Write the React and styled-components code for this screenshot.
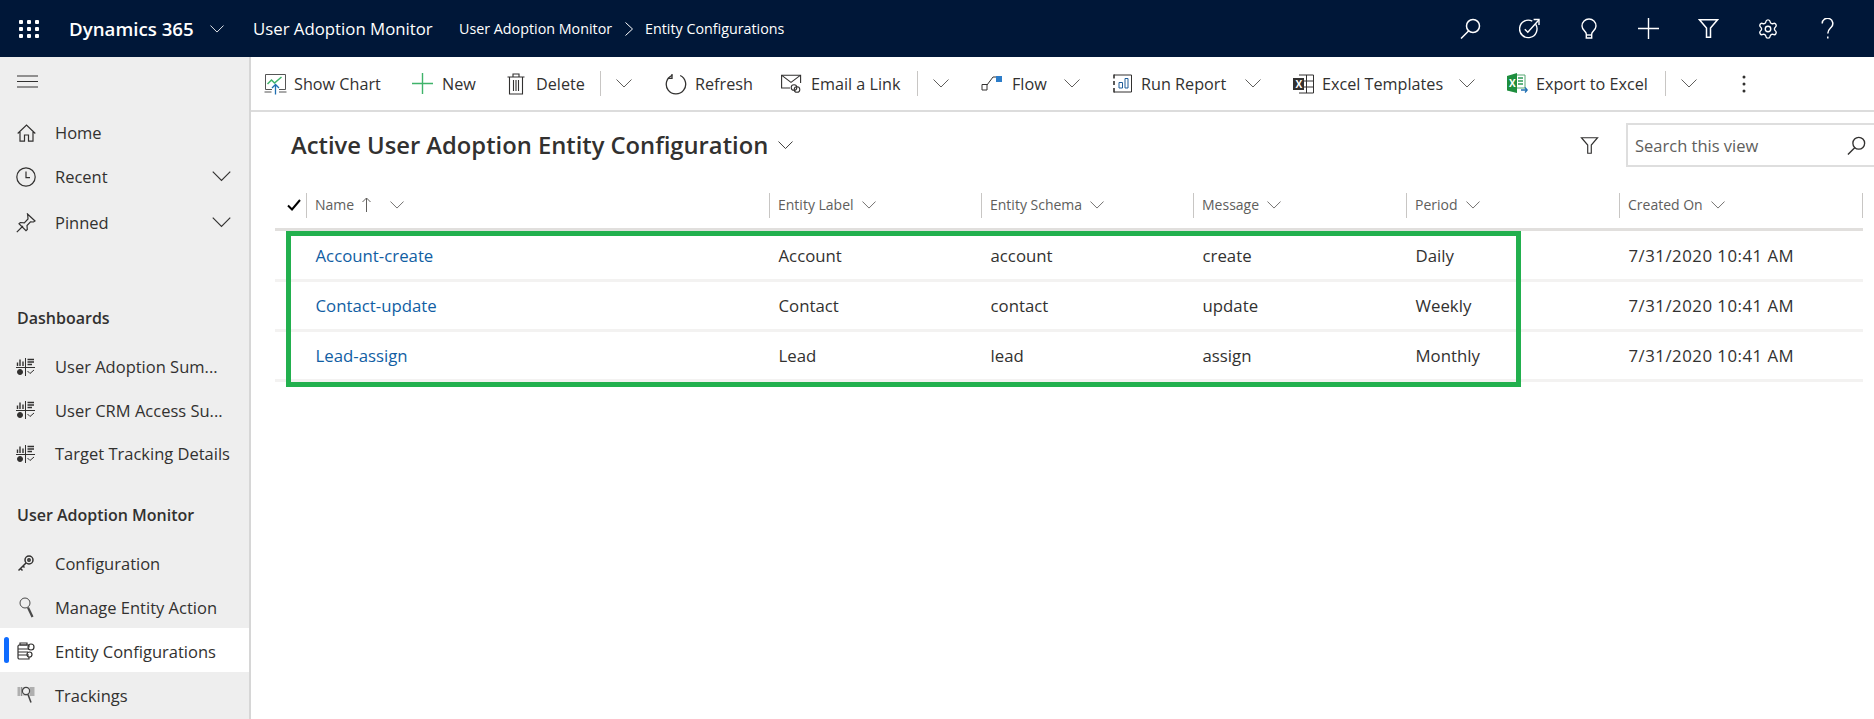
import React from 'react'
import styled, { createGlobalStyle } from 'styled-components'
import { Settings } from 'lucide-react'

const Global = createGlobalStyle`
  html, body { margin: 0; padding: 0; background: #fff; }
  body { font-family: "Open Sans", "Noto Sans", sans-serif; color: #323130; }
`

const Page = styled.div`
  width: 100%;
  height: 100vh;
  display: flex;
  flex-direction: column;
  overflow: hidden;
`

const TopBar = styled.header`
  height: 57px;
  flex: none;
  background: #001738;
  color: #fff;
  display: flex;
  align-items: center;
`

const Waffle = styled.div`
  width: 20px;
  height: 18px;
  margin-left: 19px;
  display: grid;
  grid-template-columns: repeat(3, 4px);
  grid-template-rows: repeat(3, 4px);
  justify-content: space-between;
  align-content: space-between;
  span { background: #fff; border-radius: 1px; }
`

const Brand = styled.div`
  margin-left: 30px;
  width: 141px;
  font-size: 18.7px;
  font-weight: 600;
  white-space: nowrap;
`

const AppName = styled.div`
  margin-left: 29px;
  width: 206px;
  font-size: 16.8px;
  white-space: nowrap;
`

const Crumbs = styled.div`
  display: flex;
  align-items: center;
  font-size: 14.3px;
  white-space: nowrap;
`

const CrumbText = styled.span`
  width: ${p => p.$w}px;
`

const TopIcons = styled.div`
  margin-left: auto;
  margin-right: 17px;
  display: flex;
`

const TopIcon = styled.div`
  width: 59.5px;
  height: 57px;
  display: flex;
  align-items: center;
  justify-content: center;
`

const Body = styled.div`
  flex: 1;
  display: flex;
  min-height: 0;
`

const Sidebar = styled.nav`
  width: 249px;
  flex: none;
  background: #eeeeee;
  border-right: 2px solid #d6d6d6;
`

const MenuRow = styled.div`
  height: 52.5px;
  display: flex;
  align-items: center;
  padding-left: 17px;
  padding-bottom: 3px;
  box-sizing: border-box;
`

const NavItem = styled.div`
  position: relative;
  height: ${p => p.$h || 44}px;
  margin-top: ${p => p.$mt || 0}px;
  padding-top: 2px;
  box-sizing: border-box;
  display: flex;
  align-items: center;
  font-size: 16.5px;
  white-space: nowrap;
  background: ${p => (p.$active ? '#fff' : 'transparent')};
`

const NavIcon = styled.span`
  width: 55px;
  flex: none;
  display: flex;
  justify-content: center;
  padding-right: 3px;
  box-sizing: border-box;
`

const NavChevron = styled.span`
  margin-left: auto;
  margin-right: 18px;
  display: flex;
`

const Marker = styled.span`
  position: absolute;
  left: 4px;
  top: 9px;
  width: 5px;
  height: 26px;
  border-radius: 3px;
  background: #0f6cff;
`

const SectionTitle = styled.div`
  height: 40px;
  margin-top: ${p => p.$mt}px;
  padding-left: 17px;
  display: flex;
  align-items: center;
  font-size: 16px;
  font-weight: 600;
`

const Main = styled.main`
  flex: 1;
  min-width: 0;
  display: flex;
  flex-direction: column;
  overflow: hidden;
`

const CommandBar = styled.div`
  height: 55px;
  flex: none;
  box-sizing: border-box;
  border-bottom: 2px solid #dcdcdc;
  padding-left: 13px;
  display: flex;
  align-items: center;
  font-size: 16.2px;
`

const Cmd = styled.div`
  width: ${p => p.$w}px;
  flex: none;
  display: flex;
  align-items: center;
  white-space: nowrap;
`

const CmdIcon = styled.span`
  width: ${p => p.$w || 30}px;
  flex: none;
  display: flex;
  align-items: center;
`

const CmdLabel = styled.span`
  width: ${p => p.$w}px;
  flex: none;
`

const CmdSep = styled.span`
  width: 1px;
  height: 25px;
  background: #c8c6c4;
  margin-right: 15px;
  flex: none;
`

const TitleRow = styled.div`
  margin: 11px -12px 0 40px;
  height: 44px;
  flex: none;
  display: flex;
  align-items: center;
`

const Title = styled.h1`
  margin: 0;
  font-size: 23.75px;
  font-weight: 600;
  white-space: nowrap;
`

const TitleChevron = styled.span`
  margin-left: 10px;
  display: flex;
`

const FilterBtn = styled.span`
  margin-left: auto;
  margin-right: 27px;
  display: flex;
`

const SearchBox = styled.div`
  width: 260px;
  height: 44px;
  flex: none;
  box-sizing: border-box;
  border: 2px solid #dedede;
  padding: 0 18px 0 7px;
  display: flex;
  align-items: center;
  justify-content: space-between;
  font-size: 16.5px;
  color: #605e5c;
`

const TableWrap = styled.div`
  position: relative;
  margin-left: 24px;
  width: 1588px;
`

const columns = '31px 463px 212px 212px 213px 213px 244px'

const HeadRow = styled.div`
  display: grid;
  grid-template-columns: ${columns};
  height: 64px;
  box-sizing: border-box;
  padding-top: 26px;
  border-bottom: 3px solid #e1dfdd;
  margin-bottom: 1px;
  align-items: start;
`

const CheckCell = styled.div`
  height: 25px;
  display: flex;
  align-items: center;
  padding-left: 12px;
  padding-bottom: 1px;
  box-sizing: border-box;
`

const HeadCell = styled.div`
  height: 25px;
  box-sizing: border-box;
  border-left: 1px solid #c8c6c4;
  border-right: ${p => (p.$last ? '1px solid #c8c6c4' : 'none')};
  padding: 0 0 2px 8px;
  display: flex;
  align-items: center;
  gap: 8px;
  font-size: 14px;
  color: #605e5c;
  white-space: nowrap;
`

const Row = styled.div`
  display: grid;
  grid-template-columns: ${columns};
  height: 50px;
  box-sizing: border-box;
  border-bottom: 3px solid #f3f2f1;
  align-items: center;
  font-size: 16.8px;
`

const Cell = styled.div`
  padding-left: 9.5px;
  white-space: nowrap;
`

const LinkCell = styled(Cell)`
  color: #115ea3;
`

const DateCell = styled(Cell)`
  letter-spacing: 0.5px;
`

const Highlight = styled.div`
  position: absolute;
  left: 11px;
  top: 64px;
  width: 1235px;
  height: 156px;
  box-sizing: border-box;
  border: 5px solid #22b04e;
  pointer-events: none;
`

const Svg = ({ w = 20, h = 20, c = 'currentColor', sw = 1.2, children }) => (
  <svg width={w} height={h} viewBox={`0 0 ${w} ${h}`} fill="none" stroke={c} strokeWidth={sw} style={{ display: 'block' }}>
    {children}
  </svg>
)

const Chevron = ({ w = 16, c = '#605e5c' }) => (
  <svg width={w} height={w / 2 + 1} viewBox="0 0 16 9" fill="none" stroke={c} strokeWidth="1" style={{ display: 'block' }}>
    <path d="M.5.5 8 8l7.5-7.5" />
  </svg>
)

const IconSearch = ({ c = '#fff', size = 21 }) => (
  <svg width={size} height={size} viewBox="0 0 21 21" fill="none" stroke={c} strokeWidth="1.5" style={{ display: 'block' }}>
    <circle cx="13" cy="8" r="6.5" />
    <path d="M8.8 12.8 1 20.5" />
  </svg>
)

const IconTask = () => (
  <Svg w={21} h={21} c="#fff" sw={1.4}>
    <path d="M16.6 6.2a8.7 8.7 0 1 1-3.3-3" />
    <path d="m5.8 11.2 3 3L19.8 2" />
    <path d="M14.6 1.5h5.4v5.4" />
  </Svg>
)

const IconBulb = () => (
  <Svg w={16} h={21} c="#fff" sw={1.4}>
    <path d="M5.3 20h5.4v-4c0-2.5 4.3-3.8 4.3-8a7 7 0 0 0-14 0c0 4.2 4.3 5.5 4.3 8z" />
    <path d="M5.3 17h5.4" />
  </Svg>
)

const IconPlus = ({ c = '#fff', size = 21, sw = 1.4 }) => (
  <Svg w={size} h={size} c={c} sw={sw}>
    <path d={`M${size / 2} 0v${size}M0 ${size / 2}h${size}`} />
  </Svg>
)

const IconFunnel = ({ c = '#fff', w = 21, h = 19, sw = 1.5 }) => (
  <svg width={w} height={h} viewBox="0 0 21 19" fill="none" stroke={c} strokeWidth={sw} style={{ display: 'block' }}>
    <path d="M1.5.8h18l-7 8.2v9.2h-4V9z" />
  </svg>
)

const IconHelp = () => (
  <Svg w={13} h={21} c="#fff" sw={1.5}>
    <path d="M1.2 5.6a5.3 5.3 0 1 1 9 3.7c-1.8 1.8-3.4 2.8-3.4 6.2" />
    <path d="M6.8 18.4v2" />
  </Svg>
)

const IconHamburger = () => (
  <Svg w={21} h={13} c="#323130" sw={1.2}>
    <path d="M0 1h21M0 6.5h21M0 12h21" />
  </Svg>
)

const IconHome = () => (
  <Svg w={19} h={18} c="#323130" sw={1.2}>
    <path d="M.7 9.5 9.5 1l8.8 8.5M3 8v9.2h4.5V11h4v6.2H16V8" />
  </Svg>
)

const IconClock = () => (
  <Svg w={20} h={20} c="#323130" sw={1.2}>
    <circle cx="10" cy="10" r="9.2" />
    <path d="M10 4.5v6.2h4" />
  </Svg>
)

const IconPin = () => (
  <Svg w={20} h={20} c="#323130" sw={1.2}>
    <path d="M.8 19.2 7 13M11.5 1l7.5 7-1.5 1-3-.2-3.5 3.7.3 4-1.3 1.2L3 10.8l1.3-1.3 4 .3L12 6l-.2-3z" />
  </Svg>
)

const IconDash = () => (
  <svg width="20" height="18" viewBox="0 0 20 18" style={{ display: 'block' }} stroke="#323130" strokeWidth="1" fill="none">
    <path d="M0 9.5h19M9.5 0v18" />
    <path d="M1.5 8V4.5M4 8V1.5M7 8V3.5M11.5 1.5H18M11.5 4H18M11.5 6.5H16" strokeWidth="1.4" />
    <circle cx="4" cy="14" r="2.5" fill="#323130" />
    <path d="m11.5 13 2.5 2.5 4-3.5" />
  </svg>
)

const IconKey = () => (
  <Svg w={18} h={18} c="#323130" sw={1.5}>
    <circle cx="12" cy="6" r="4" />
    <circle cx="12" cy="6" r="1.2" />
    <path d="M9 9 1.5 16.5M3.5 14.5l2 2M6 12l1.5 1.5" />
  </Svg>
)

const IconManage = () => (
  <svg width="15" height="21" viewBox="0 0 15 21" fill="none" stroke="#4a4a4a" style={{ display: 'block' }}>
    <circle cx="6" cy="6" r="5" strokeWidth="1" />
    <path d="m9 10.5 4.5 9.5" strokeWidth="2.2" />
  </svg>
)

const IconEntity = () => (
  <svg width="18" height="18" viewBox="0 0 18 18" fill="none" stroke="#323130" strokeWidth="1.2" style={{ display: 'block' }}>
    <path d="M12 5.5V3H2a1.5 1.5 0 0 0-1 1.2v11.6A1.5 1.5 0 0 0 2 17h10v-2" />
    <path d="M3 1h7v2H3zM1 7h11M1 10h10M1 13h11" />
    <circle cx="14" cy="5" r="3" />
    <circle cx="12.5" cy="12.5" r="2.5" />
  </svg>
)

const IconTrack = () => (
  <svg width="18" height="18" viewBox="0 0 18 18" fill="none" style={{ display: 'block' }}>
    <path d="M0 1h18v9H0z" fill="#cfcfcf" />
    <path d="M2 1v9M4.5 1v9M14 1v9M16 1v9" stroke="#8f8f8f" />
    <circle cx="9" cy="5" r="3.6" fill="#eee" stroke="#444" strokeWidth="1.2" />
    <path d="m11 8.5 3 8" stroke="#444" strokeWidth="1.6" />
  </svg>
)

const IconChart = () => (
  <svg width="23" height="22" viewBox="0 0 23 22" fill="none" style={{ display: 'block' }}>
    <path d="M1.5 16.5V1.5h20v15H15M8 16.5H1.5M.5 19h7M15 19h7.5" stroke="#555" />
    <path d="m3.5 11 4-4 3 3 7-6" stroke="#3fb36a" strokeWidth="1.5" />
    <path d="M11.5 21.5V11.5M8 15l3.5-3.5L15 15" stroke="#1f6fb2" strokeWidth="1.3" />
  </svg>
)

const IconTrash = () => (
  <Svg w={18} h={22} c="#323130" sw={1.1}>
    <path d="M.5 4h17M6 4V1h6v3M2.5 4v17h13V4M6.5 7v11M9 7v11M11.5 7v11" />
  </Svg>
)

const IconRefresh = () => (
  <Svg w={22} h={22} c="#323130" sw={1.3}>
    <path d="M7.2 2.3a9.7 9.7 0 1 0 8 .2" />
    <path d="M7 1v4.4H2.8" />
  </Svg>
)

const IconMail = () => (
  <Svg w={21} h={19} c="#323130" sw={1.1}>
    <path d="M9 14H.6V1.2h19V9" />
    <path d="m.8 1.4 9.2 7 9.3-7" />
    <circle cx="13" cy="13.5" r="2.8" />
    <circle cx="16" cy="15.5" r="2.8" />
  </Svg>
)

const IconFlow = () => (
  <svg width="21" height="15" viewBox="0 0 21 15" fill="none" style={{ display: 'block' }}>
    <path d="M1 8.5h5v5.5H1z" stroke="#323130" />
    <path d="m6 9 6-8h3" stroke="#323130" />
    <path d="M15 0h6v6h-6z" fill="#2d7dc9" />
  </svg>
)

const IconReport = () => (
  <svg width="20" height="19" viewBox="0 0 20 19" fill="none" stroke="#323130" style={{ display: 'block' }}>
    <path d="M2 1h17.5v17H2" />
    <path d="M2 .5v4M2 7v4M2 14v4.5" strokeWidth="1.6" />
    <path d="M7 8.5h3.5V14H7zM13 4.5h3V14h-3z" stroke="#1f5c99" />
  </svg>
)

const IconExcelT = () => (
  <svg width="21" height="20" viewBox="0 0 21 20" fill="none" style={{ display: 'block' }}>
    <path d="M6 1h14.5v18H6M6 7h14.5M6 13h14.5M13.5 1v18" stroke="#323130" />
    <path d="M0 4h11v12H0z" fill="#323130" />
    <text x="2.6" y="13.5" fontSize="10" fontWeight="700" fill="#fff" fontFamily="Open Sans">X</text>
  </svg>
)

const IconExcel = () => (
  <svg width="21" height="21" viewBox="0 0 21 21" fill="none" style={{ display: 'block' }}>
    <path d="M8 2h10v13H8z" fill="#fff" stroke="#57a773" />
    <path d="M11 5h5M11 8h5M11 11h5" stroke="#2e9b57" strokeWidth="1.6" />
    <path d="M0 3 10 0v20L0 17.5z" fill="#1e8e3e" />
    <text x="2" y="13.5" fontSize="10" fontWeight="700" fill="#fff" fontFamily="Open Sans">X</text>
    <path d="M14 17h6m-2-2.5 2.2 2.5-2.2 2.5" stroke="#1f6fb2" strokeWidth="1.3" />
  </svg>
)

const IconMore = () => (
  <svg width="4" height="18" viewBox="0 0 4 18" fill="#323130" style={{ display: 'block' }}>
    <circle cx="2" cy="2" r="1.5" />
    <circle cx="2" cy="9" r="1.5" />
    <circle cx="2" cy="16" r="1.5" />
  </svg>
)

const IconCheck = () => (
  <Svg w={14} h={12} c="#000" sw={2}>
    <path d="m1 6.5 4 4L13 1" />
  </Svg>
)

const IconSortUp = () => (
  <Svg w={9} h={15} c="#605e5c" sw={1}>
    <path d="M4.5 15V1M.5 5l4-4 4 4" />
  </Svg>
)

const rows = [
  ['Account-create', 'Account', 'account', 'create', 'Daily'],
  ['Contact-update', 'Contact', 'contact', 'update', 'Weekly'],
  ['Lead-assign', 'Lead', 'lead', 'assign', 'Monthly']
]

const headers = ['Entity Label', 'Entity Schema', 'Message', 'Period']

const App = () => {
  return (
    <Page>
      <Global />
      <TopBar>
        <Waffle>
          {Array.from({ length: 9 }).map((_, i) => <span key={i} />)}
        </Waffle>
        <Brand>Dynamics 365</Brand>
        <Chevron w={14} c="#fff" />
        <AppName>User Adoption Monitor</AppName>
        <Crumbs>
          <CrumbText $w={166}>User Adoption Monitor</CrumbText>
          <svg width="8" height="14" viewBox="0 0 8 14" fill="none" stroke="#fff" style={{ marginRight: 12 }}>
            <path d="m.5.5 7 6.5-7 6.5" />
          </svg>
          <span>Entity Configurations</span>
        </Crumbs>
        <TopIcons>
          <TopIcon><IconSearch /></TopIcon>
          <TopIcon><IconTask /></TopIcon>
          <TopIcon><IconBulb /></TopIcon>
          <TopIcon><IconPlus /></TopIcon>
          <TopIcon><IconFunnel /></TopIcon>
          <TopIcon><Settings size={22} strokeWidth={1.5} color="#fff" /></TopIcon>
          <TopIcon><IconHelp /></TopIcon>
        </TopIcons>
      </TopBar>
      <Body>
        <Sidebar>
          <MenuRow><IconHamburger /></MenuRow>
          <NavItem><NavIcon><IconHome /></NavIcon>Home</NavItem>
          <NavItem><NavIcon><IconClock /></NavIcon>Recent<NavChevron><Chevron w={19} c="#323130" /></NavChevron></NavItem>
          <NavItem $mt={2}><NavIcon><IconPin /></NavIcon>Pinned<NavChevron><Chevron w={19} c="#323130" /></NavChevron></NavItem>
          <SectionTitle $mt={54.5}>Dashboards</SectionTitle>
          <NavItem $h={43.5} $mt={6}><NavIcon><IconDash /></NavIcon>User Adoption Sum...</NavItem>
          <NavItem $h={43.5}><NavIcon><IconDash /></NavIcon>User CRM Access Su...</NavItem>
          <NavItem $h={43.5}><NavIcon><IconDash /></NavIcon>Target Tracking Details</NavItem>
          <SectionTitle $mt={20.5}>User Adoption Monitor</SectionTitle>
          <NavItem $mt={5}><NavIcon><IconKey /></NavIcon>Configuration</NavItem>
          <NavItem><NavIcon><IconManage /></NavIcon>Manage Entity Action</NavItem>
          <NavItem $active><Marker /><NavIcon><IconEntity /></NavIcon>Entity Configurations</NavItem>
          <NavItem><NavIcon><IconTrack /></NavIcon>Trackings</NavItem>
        </Sidebar>
        <Main>
          <CommandBar>
            <Cmd $w={148}><CmdIcon><IconChart /></CmdIcon>Show Chart</Cmd>
            <Cmd $w={95}><CmdIcon><IconPlus c="#3fb36a" /></CmdIcon>New</Cmd>
            <Cmd $w={158}>
              <CmdIcon $w={29}><IconTrash /></CmdIcon>
              <CmdLabel $w={64}>Delete</CmdLabel>
              <CmdSep />
              <Chevron />
            </Cmd>
            <Cmd $w={116}><CmdIcon><IconRefresh /></CmdIcon>Refresh</Cmd>
            <Cmd $w={200}>
              <CmdIcon><IconMail /></CmdIcon>
              <CmdLabel $w={106}>Email a Link</CmdLabel>
              <CmdSep />
              <Chevron />
            </Cmd>
            <Cmd $w={131}>
              <CmdIcon $w={31}><IconFlow /></CmdIcon>
              <CmdLabel $w={52}>Flow</CmdLabel>
              <Chevron />
            </Cmd>
            <Cmd $w={181}>
              <CmdIcon $w={29}><IconReport /></CmdIcon>
              <CmdLabel $w={104}>Run Report</CmdLabel>
              <Chevron />
            </Cmd>
            <Cmd $w={214}>
              <CmdIcon $w={29}><IconExcelT /></CmdIcon>
              <CmdLabel $w={137}>Excel Templates</CmdLabel>
              <Chevron />
            </Cmd>
            <Cmd $w={235}>
              <CmdIcon $w={29}><IconExcel /></CmdIcon>
              <CmdLabel $w={129}>Export to Excel</CmdLabel>
              <CmdSep />
              <Chevron />
            </Cmd>
            <Cmd $w={10}><IconMore /></Cmd>
          </CommandBar>
          <TitleRow>
            <Title>Active User Adoption Entity Configuration</Title>
            <TitleChevron><Chevron w={15} c="#323130" /></TitleChevron>
            <FilterBtn><IconFunnel c="#323130" w={19} h={17} sw={1.3} /></FilterBtn>
            <SearchBox>
              Search this view
              <IconSearch c="#323130" size={19} />
            </SearchBox>
          </TitleRow>
          <TableWrap>
            <HeadRow>
              <CheckCell><IconCheck /></CheckCell>
              <HeadCell>Name <IconSortUp /><span style={{ width: 3 }} /><Chevron w={14} /></HeadCell>
              {headers.map(h => <HeadCell key={h}>{h}<Chevron w={14} /></HeadCell>)}
              <HeadCell $last>Created On<Chevron w={14} /></HeadCell>
            </HeadRow>
            {rows.map(r => (
              <Row key={r[0]}>
                <span />
                <LinkCell>{r[0]}</LinkCell>
                <Cell>{r[1]}</Cell>
                <Cell>{r[2]}</Cell>
                <Cell>{r[3]}</Cell>
                <Cell>{r[4]}</Cell>
                <DateCell>7/31/2020 10:41 AM</DateCell>
              </Row>
            ))}
            <Highlight />
          </TableWrap>
        </Main>
      </Body>
    </Page>
  )
}

export default App
